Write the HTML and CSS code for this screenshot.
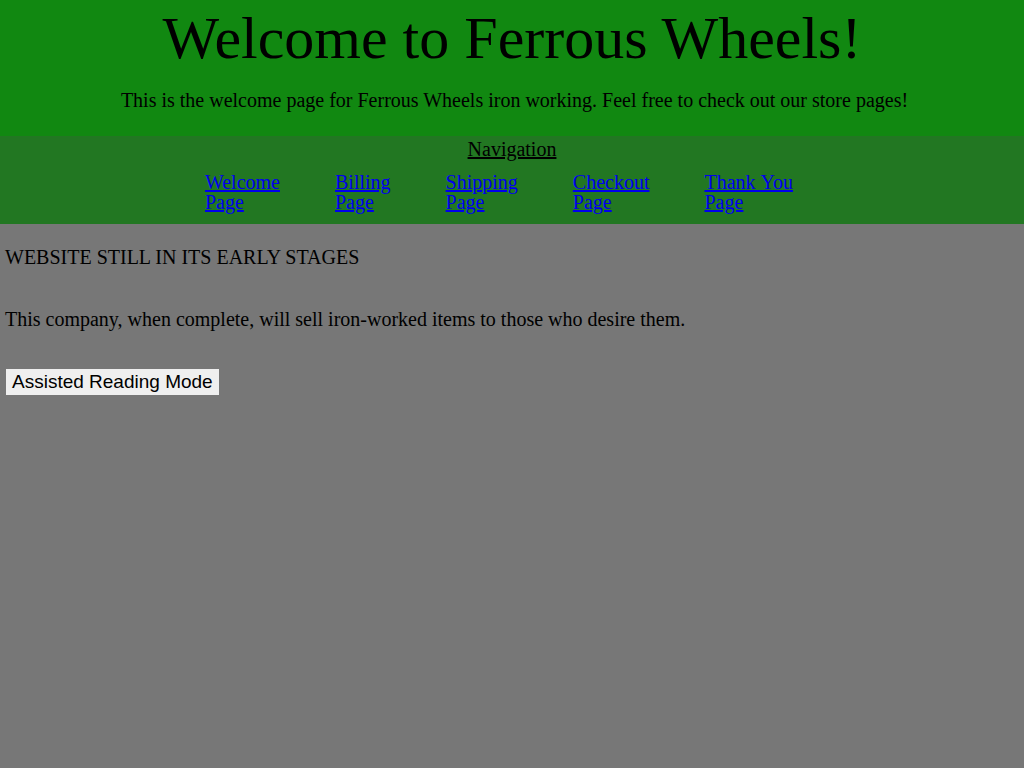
FILE: index.html
```html
<!DOCTYPE html>
<html lang="en">
<head>
<meta charset="utf-8">
<title>Ferrous Wheels</title>
<link rel="stylesheet" href="styles.css">
</head>
<body>
<header class="site-header">
  <h1 class="title">Welcome to Ferrous Wheels!</h1>
  <p class="subtitle">This is the welcome page for Ferrous Wheels iron working. Feel free to check out our store pages!</p>
</header>
<nav class="site-nav">
  <div class="nav-title">Navigation</div>
  <ul class="nav-list">
    <li class="nav-item"><a href="#">Welcome Page</a></li>
    <li class="nav-item"><a href="#">Billing Page</a></li>
    <li class="nav-item"><a href="#">Shipping Page</a></li>
    <li class="nav-item"><a href="#">Checkout Page</a></li>
    <li class="nav-item"><a href="#">Thank&nbsp;You Page</a></li>
  </ul>
</nav>
<main class="content">
  <p class="notice">WEBSITE STILL IN ITS EARLY STAGES</p>
  <p class="intro">This company, when complete, will sell iron-worked items to those who desire them.</p>
  <button class="assist-btn" type="button">Assisted Reading Mode</button>
</main>
</body>
</html>
```

FILE: styles.css
```css
html, body {
  margin: 0;
  padding: 0;
}
body {
  background: #777777;
  font-family: "Liberation Serif", "Times New Roman", serif;
  font-size: 20px;
  color: #000;
  min-height: 768px;
}
.site-header {
  background: #118811;
  text-align: center;
  padding: 4px 0 24px;
}
.title {
  margin: 0;
  font-size: 60px;
  font-weight: normal;
}
.subtitle {
  margin: 16px 0 0;
  padding-left: 5px;
}
.site-nav {
  background: #227722;
  padding: 2px 0 12px;
  text-align: center;
}
.nav-title {
  text-decoration: underline;
}
.nav-list {
  list-style: none;
  margin: 11px 0 0;
  padding: 0 26px 0 0;
  display: flex;
  justify-content: center;
  gap: 55px;
}
.nav-item {
  width: min-content;
  text-align: left;
  line-height: 20px;
}
.nav-item a {
  color: #0000ee;
}
.content {
  padding: 0 5px;
  display: flex;
  flex-direction: column;
  align-items: flex-start;
}
.notice {
  margin: 22px 0 0;
}
.intro {
  margin: 39px 0 0;
}
.assist-btn {
  margin: 38px 0 0 1px;
  font-family: "Liberation Sans", Arial, sans-serif;
  font-size: 19px;
  padding: 1px 6px;
  border: none;
  background: #efefef;
  color: #000;
  height: 26px;
  line-height: 22px;
}
```
